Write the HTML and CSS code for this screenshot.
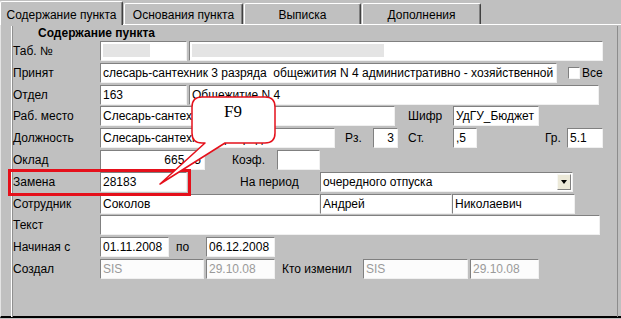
FILE: index.html
```html
<!DOCTYPE html>
<html lang="ru">
<head>
    <meta charset="UTF-8">
    <title>Содержание пункта</title>
    <link rel="stylesheet" href="styles.css">
</head>
<body>
    <div class="tabs">
        <div class="tab active tab-content">Содержание пункта</div>
        <div class="tab tab-basis">Основания пункта</div>
        <div class="tab tab-extract">Выписка</div>
        <div class="tab tab-extra">Дополнения</div>
    </div>

    <div class="panel">
        <div class="group">
            <div class="group-title">Содержание пункта</div>

            <div class="row">
                <span class="lbl">Таб. №</span>
                <span class="f tabno"><span class="blur blur-short"></span></span>
                <span class="f tabfio"><span class="blur blur-long"></span></span>
            </div>

            <div class="row">
                <span class="lbl">Принят</span>
                <span class="f prinyat">слесарь-сантехник 3 разряда&nbsp; общежития N 4 административно - хозяйственной</span>
                <span class="check"></span>
                <span class="cap check-lbl">Все</span>
            </div>

            <div class="row">
                <span class="lbl">Отдел</span>
                <span class="f otdel">163</span>
                <span class="f otdel-name">Общежитие N 4</span>
            </div>

            <div class="row">
                <span class="lbl">Раб. место</span>
                <span class="f rabmesto">Слесарь-сантехник</span>
                <span class="cap shifr-lbl">Шифр</span>
                <span class="f shifr">УдГУ_Бюджет</span>
            </div>

            <div class="row">
                <span class="lbl">Должность</span>
                <span class="f dolzh">Слесарь-сантехник 3 разряда</span>
                <span class="cap rz-lbl">Рз.</span>
                <span class="f num rz">3</span>
                <span class="cap st-lbl">Ст.</span>
                <span class="f st">,5</span>
                <span class="cap gr-lbl">Гр.</span>
                <span class="f gr">5.1</span>
            </div>

            <div class="row">
                <span class="lbl">Оклад</span>
                <span class="f num oklad">665.45</span>
                <span class="cap koef-lbl">Коэф.</span>
                <span class="f koef"></span>
            </div>

            <div class="row">
                <span class="lbl">Замена</span>
                <span class="f zamena">28183</span>
                <span class="cap period-lbl">На период</span>
                <span class="f select">
                    <span class="select-text">очередного отпуска</span>
                    <span class="select-btn"></span>
                </span>
            </div>

            <div class="row">
                <span class="lbl">Сотрудник</span>
                <span class="f fam">Соколов</span>
                <span class="f name">Андрей</span>
                <span class="f otch">Николаевич</span>
            </div>

            <div class="row">
                <span class="lbl">Текст</span>
                <span class="f text"></span>
            </div>

            <div class="row">
                <span class="lbl">Начиная с</span>
                <span class="f date-from">01.11.2008</span>
                <span class="cap po-lbl">по</span>
                <span class="f date-to">06.12.2008</span>
            </div>

            <div class="row">
                <span class="lbl">Создал</span>
                <span class="f off created">SIS</span>
                <span class="f off created-date">29.10.08</span>
                <span class="cap changed-lbl">Кто изменил</span>
                <span class="f off changed">SIS</span>
                <span class="f off changed-date">29.10.08</span>
            </div>
        </div>
    </div>

    <!-- подсветка поля и выноска с клавишей -->
    <div class="marker"></div>
    <svg class="callout" width="621" height="319" viewBox="0 0 621 319">
        <path d="M202 97 H265 Q275 97 275 107 V133 Q275 143 265 143 H225 L160 184 L205 143 H202 Q192 143 192 133 V107 Q192 97 202 97 Z"
              fill="#fff" stroke="#e5101b" stroke-width="1.5" stroke-linejoin="round"/>
        <text x="233" y="117" text-anchor="middle" class="callout-text">F9</text>
    </svg>
</body>
</html>
```

FILE: styles.css
```css
* {
    margin: 0;
    padding: 0;
    box-sizing: border-box;
}

body {
    width: 621px;
    height: 319px;
    overflow: hidden;
    position: relative;
    background: #c0c0c0;
    font-family: "Liberation Sans", Arial, sans-serif;
    font-size: 12px;
    color: #000;
}

/* Вкладки */
.tabs {
    display: flex;
    align-items: flex-end;
    gap: 1px;
    height: 24px;
    position: relative;
    z-index: 1;
}

.tab {
    height: 21px;
    padding-top: 1px;
    line-height: 20px;
    text-align: center;
    white-space: nowrap;
    background: #c0c0c0;
    border-top: 1px solid #fff;
    border-left: 1px solid #fff;
    border-right: 1px solid #404040;
    box-shadow: inset -1px 0 #808080;
    border-radius: 2px 2px 0 0;
}

.tab.active {
    height: 24px;
    padding-top: 3px;
    margin-bottom: -1px;
}

.tab-content { width: 123px; }
.tab-basis { width: 119px; }
.tab-extract { width: 117px; }
.tab-extra { width: 119px; }

/* Панель */
.panel {
    height: 294px;
    border-top: 1px solid #fff;
    border-left: 1px solid #e4e4e4;
    border-bottom: 2px solid #000;
    padding-left: 10px;
}

.group {
    width: 607px;
    height: 100%;
    border-left: 1px solid #fff;
    border-right: 1px solid #8c8c8c;
    box-shadow: inset 1px 0 #909090;
    padding-left: 1px;
}

.group-title {
    font-weight: bold;
    height: 15px;
    line-height: 15px;
    margin-top: 1px;
    padding-left: 25px;
}

.row {
    display: flex;
    align-items: center;
    height: 20px;
    margin-bottom: 1.8px;
}

.lbl {
    width: 87px;
    flex-shrink: 0;
    white-space: nowrap;
}

.cap {
    flex-shrink: 0;
    white-space: nowrap;
}

/* Поля ввода */
.f {
    flex-shrink: 0;
    height: 20px;
    padding: 0 2px;
    line-height: 18px;
    white-space: nowrap;
    overflow: hidden;
    background: #fff;
    border-top: 1px solid #808080;
    border-left: 1px solid #808080;
    border-right: 1px solid #f0f0f0;
    border-bottom: 1px solid #f0f0f0;
}

.f.num {
    text-align: right;
    padding-right: 3px;
}

.f.off {
    color: #9a9a9a;
    background: #fcfcfc;
}

.blur {
    display: inline-block;
    height: 13px;
    margin-top: 2px;
    background: #e4e4e4;
    vertical-align: top;
}

.blur-short { width: 47px; }
.blur-long { width: 192px; }

.check {
    width: 12px;
    height: 12px;
    margin-left: 11px;
    background: #fff;
    border-top: 1px solid #808080;
    border-left: 1px solid #808080;
    border-right: 1px solid #f4f4f4;
    border-bottom: 1px solid #f4f4f4;
    flex-shrink: 0;
}

.check-lbl { margin-left: 2px; }

.tabno { width: 87px; }
.tabfio { width: 414px; margin-left: 2px; }
.prinyat { width: 457px; }
.otdel { width: 87px; }
.otdel-name { width: 410px; margin-left: 2px; }
.rabmesto { width: 295px; }
.shifr-lbl { width: 58px; padding-left: 13px; }
.shifr { width: 86px; }
.dolzh { width: 235px; }
.rz-lbl { width: 38px; padding-left: 10px; }
.rz { width: 25px; }
.st-lbl { width: 55px; padding-left: 10px; }
.st { width: 24px; }
.gr-lbl { width: 90px; padding-left: 68px; }
.gr { width: 36px; }
.oklad { width: 105px; }
.koef-lbl { width: 72px; padding-left: 27px; }
.koef { width: 43px; }
.zamena { width: 87px; }
.period-lbl { width: 133px; padding-left: 53px; }
.fam { width: 220px; }
.name { width: 132px; }
.otch { width: 123px; }
.text { width: 500px; }
.date-from { width: 69px; }
.po-lbl { width: 37px; padding-left: 7px; }
.date-to { width: 69px; }
.created { width: 104px; }
.created-date { width: 69px; margin-left: 2px; }
.changed-lbl { width: 88px; padding-left: 7px; }
.changed { width: 105px; }
.changed-date { width: 69px; margin-left: 2px; }

/* Выпадающий список */
.select {
    width: 253px;
    display: flex;
    align-items: center;
    padding-right: 1px;
}

.select-text {
    flex: 1;
}

.select-btn {
    width: 14px;
    height: 16px;
    background: #ece9d8;
    border: 1px solid #f8f8f4;
    border-right-color: #808080;
    border-bottom-color: #808080;
    display: flex;
    align-items: center;
    justify-content: center;
}

.select-btn::after {
    content: '';
    border-left: 3px solid transparent;
    border-right: 3px solid transparent;
    border-top: 4px solid #000;
}

/* Выделение и выноска */
.marker {
    position: absolute;
    left: 8px;
    top: 169px;
    width: 183px;
    height: 27px;
    border: 3px solid #e5101b;
}

.callout {
    position: absolute;
    left: 0;
    top: 0;
    pointer-events: none;
}

.callout-text {
    font-family: "Liberation Serif", "Times New Roman", serif;
    font-size: 17px;
    fill: #000;
}
```
